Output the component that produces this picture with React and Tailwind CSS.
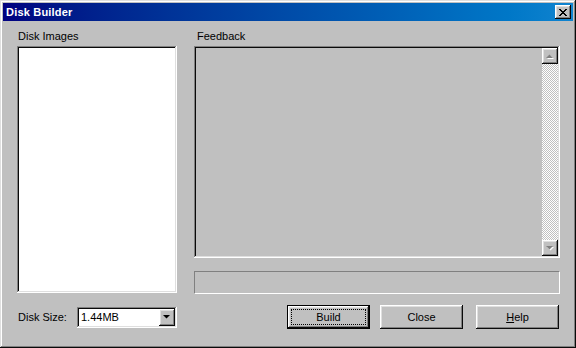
import React from 'react';

const raised =
  'shadow-[inset_-1px_-1px_#0a0a0a,inset_1px_1px_#ffffff,inset_-2px_-2px_#808080,inset_2px_2px_#dfdfdf]';
const sunken =
  'shadow-[inset_-1px_-1px_#ffffff,inset_1px_1px_#808080,inset_-2px_-2px_#dfdfdf,inset_2px_2px_#0a0a0a]';

function Arrow({ dir = 'down', disabled = false }) {
  const pts = dir === 'up' ? '0,4 3.5,0.5 7,4' : '0,0 7,0 3.5,3.5';
  return (
    <svg width="8" height="5" viewBox="0 0 8 5" className="block">
      {disabled && <polygon points={pts} fill="#ffffff" transform="translate(1,1)" />}
      <polygon points={pts} fill={disabled ? '#808080' : '#000000'} />
    </svg>
  );
}

function Button({ children, isDefault, className }) {
  return (
    <div
      className={
        'h-[24px] w-[83px] ' +
        (isDefault ? 'border border-black ' : '') +
        (className || '')
      }
    >
      <div className={'relative flex h-full w-full items-center justify-center bg-[#c0c0c0] ' + raised}>
        {isDefault && (
          <div className="absolute inset-[3px] border border-dotted border-black" />
        )}
        <span className="leading-none">{children}</span>
      </div>
    </div>
  );
}

export default function App() {
  return (
    <div
      className={
        'h-[348px] w-[576px] bg-[#c0c0c0] p-[3px] text-[11px] text-black ' +
        'shadow-[inset_-1px_-1px_#0a0a0a,inset_1px_1px_#dfdfdf,inset_-2px_-2px_#808080,inset_2px_2px_#ffffff]'
      }
      style={{ fontFamily: '"Liberation Sans", Arial, sans-serif' }}
    >
      {/* title bar */}
      <div className="flex h-[18px] items-center justify-between bg-gradient-to-r from-[#000080] to-[#1084d0] pl-[3px] pr-[2px]">
        <span className="text-[11px] font-bold tracking-[0.2px] text-white">Disk Builder</span>
        <div className={'flex h-[14px] w-[16px] items-center justify-center bg-[#c0c0c0] ' + raised}>
          <svg width="8" height="7" viewBox="0 0 8 7" className="block">
            <path d="M0 0h2v1h1v1h2v-1h1v-1h2v1h-1v1h-1v1h-1v1h1v1h1v1h1v1h-2v-1h-1v-1h-2v1h-1v1h-2v-1h1v-1h1v-1h1v-1h-1v-1h-1v-1h-1z" fill="#000" />
          </svg>
        </div>
      </div>

      {/* body */}
      <div className="pl-[14px] pr-[13px] pt-[8px]">
        <div className="flex gap-[17px]">
          <div className="w-[160px]">
            <div className="h-[14px] pl-[1px] leading-[14px]">Disk Images</div>
            <div className={'mt-[3px] h-[247px] bg-white ' + sunken} />
          </div>
          <div className="w-[366px]">
            <div className="h-[14px] pl-[3px] leading-[14px]">Feedback</div>
            <div className={'mt-[3px] flex h-[212px] justify-end bg-[#c0c0c0] p-[2px] ' + sunken}>
              <div className="flex w-[16px] flex-col">
                <div className={'flex h-[16px] items-center justify-center bg-[#c0c0c0] ' + raised}>
                  <Arrow dir="up" disabled />
                </div>
                <div className="flex-1 bg-[conic-gradient(#ffffff_25%,#c0c0c0_0_50%,#ffffff_0_75%,#c0c0c0_0)] bg-[length:2px_2px]" />
                <div className={'flex h-[16px] items-center justify-center bg-[#c0c0c0] ' + raised}>
                  <Arrow dir="down" disabled />
                </div>
              </div>
            </div>
            <div className="mt-[13px] h-[23px] border border-b-white border-l-[#808080] border-r-white border-t-[#808080]" />
          </div>
        </div>

        <div className="mt-[11px] flex h-[24px] items-center">
          <span className="w-[60px] pl-[1px]">Disk Size:</span>
          <div className={'flex h-[21px] w-[100px] items-center bg-white p-[2px] ' + sunken}>
            <span className="flex-1 pl-[2px]">1.44MB</span>
            <div className={'flex h-[17px] w-[16px] items-center justify-center bg-[#c0c0c0] ' + raised}>
              <Arrow dir="down" />
            </div>
          </div>
          <Button isDefault className="ml-[110px]">Build</Button>
          <Button className="ml-[10px]">Close</Button>
          <Button className="ml-[13px]">
            <span className="underline">H</span>elp
          </Button>
        </div>
      </div>
    </div>
  );
}
